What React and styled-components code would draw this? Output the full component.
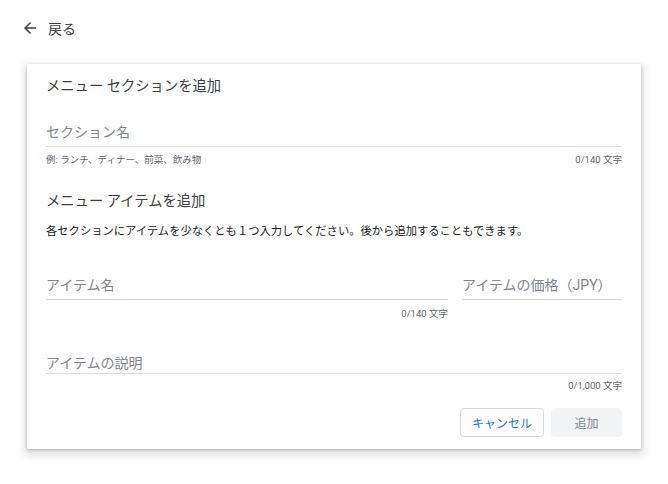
import React from 'react';
import styled, { createGlobalStyle } from 'styled-components';

const GlobalStyle = createGlobalStyle`
  body {
    margin: 0;
    background: #ffffff;
    font-family: Roboto, "Noto Sans CJK JP", sans-serif;
    color: #3c4043;
  }
`;

const Page = styled.div`
  display: flex;
  flex-direction: column;
  padding: 0 0 0 21px;
  width: 668px;
  height: 484px;
  box-sizing: border-box;
`;

const BackLink = styled.a`
  align-items: center;
  color: #3c4043;
  cursor: pointer;
  display: flex;
  font-size: 14px;
  gap: 9px;
  height: 56px;
  text-decoration: none;
`;

const Card = styled.div`
  background: #fff;
  border-radius: 1px;
  box-shadow: 0 1px 3px 0 rgba(60, 64, 67, 0.3), 0 4px 8px 3px rgba(60, 64, 67, 0.15);
  box-sizing: border-box;
  display: flex;
  flex-direction: column;
  margin: 8px 0 0 6px;
  padding: 12px 19px 12px 19px;
  width: 614px;
`;

const Heading = styled.div`
  color: #3c4043;
  font-size: 14.3px;
  line-height: 20px;
  margin-top: ${(p) => p.$top || 0}px;
`;

const Description = styled.div`
  color: #202124;
  font-size: 11.3px;
  line-height: 16px;
  margin-top: 13px;
`;

const Row = styled.div`
  display: flex;
  gap: 14px;
`;

const Field = styled.div`
  display: flex;
  flex: ${(p) => (p.$width ? `0 0 ${p.$width}px` : '1 1 0')};
  flex-direction: column;
  margin-top: ${(p) => p.$top || 0}px;
  min-width: 0;
`;

const Input = styled.input`
  background: transparent;
  border: 0;
  border-bottom: 1px solid #dadce0;
  box-sizing: content-box;
  color: #3c4043;
  font-family: inherit;
  font-size: 14px;
  height: 20px;
  line-height: 20px;
  min-width: 0;
  outline: none;
  padding: 0 0 ${(p) => (p.$tight ? 0 : 4)}px 0;
  width: 100%;

  &::placeholder {
    color: #80868b;
  }
`;

const Helper = styled.div`
  color: #5f6368;
  display: flex;
  font-size: 9.5px;
  justify-content: space-between;
  line-height: 14px;
  margin-top: ${(p) => p.$top || 6}px;
`;

const Actions = styled.div`
  display: flex;
  gap: 7px;
  justify-content: flex-end;
  margin-top: 15px;
`;

const Button = styled.button`
  background: ${(p) => (p.$primary ? '#f1f3f4' : '#fff')};
  border: 1px solid ${(p) => (p.$primary ? '#f1f3f4' : '#dadce0')};
  border-radius: 4px;
  color: ${(p) => (p.$primary ? '#80868b' : '#1a73e8')};
  font-family: inherit;
  font-size: 12px;
  height: 29px;
  padding: 0;
  width: ${(p) => p.$width}px;
`;

const ArrowBack = () => (
  <svg width="18" height="18" viewBox="0 0 24 24" fill="#3c4043">
    <path d="M20 11H7.83l5.59-5.59L12 4l-8 8 8 8 1.41-1.41L7.83 13H20v-2z" />
  </svg>
);

const App = () => (
  <Page>
    <GlobalStyle />
    <BackLink>
      <ArrowBack />
      戻る
    </BackLink>
    <Card>
      <Heading>メニュー セクションを追加</Heading>
      <Field $top={26}>
        <Input placeholder="セクション名" />
        <Helper>
          <span>例: ランチ、ディナー、前菜、飲み物</span>
          <span>0/140 文字</span>
        </Helper>
      </Field>
      <Heading $top={24}>メニュー アイテムを追加</Heading>
      <Description>各セクションにアイテムを少なくとも１つ入力してください。後から追加することもできます。</Description>
      <Row>
        <Field $top={35}>
          <Input placeholder="アイテム名" />
          <Helper $top={7}>
            <span />
            <span>0/140 文字</span>
          </Helper>
        </Field>
        <Field $top={35} $width={160}>
          <Input placeholder="アイテムの価格（JPY）" />
        </Field>
      </Row>
      <Field $top={32}>
        <Input $tight placeholder="アイテムの説明" />
        <Helper $top={5}>
          <span />
          <span>0/1,000 文字</span>
        </Helper>
      </Field>
      <Actions>
        <Button $width={84}>キャンセル</Button>
        <Button $primary $width={71}>追加</Button>
      </Actions>
    </Card>
  </Page>
);

export default App;
